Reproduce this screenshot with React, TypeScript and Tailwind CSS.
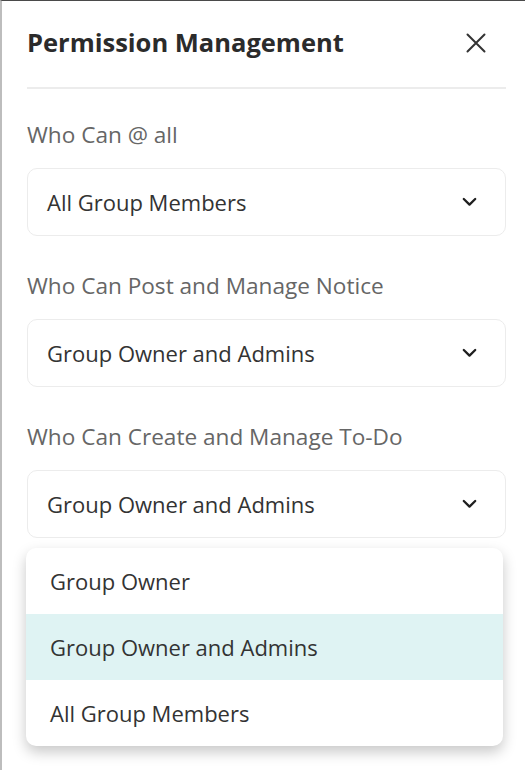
const OPTIONS = ["Group Owner", "Group Owner and Admins", "All Group Members"];

const FIELDS = [
  { label: "Who Can @ all", value: "All Group Members" },
  { label: "Who Can Post and Manage Notice", value: "Group Owner and Admins" },
  { label: "Who Can Create and Manage To-Do", value: "Group Owner and Admins" },
];

function CloseIcon() {
  return (
    <svg width="20" height="20" viewBox="0 0 20 20" className="text-[#333]">
      <path d="M1.5 1.5 18.5 18.5M18.5 1.5 1.5 18.5" stroke="currentColor" strokeWidth="2" strokeLinecap="round" fill="none" />
    </svg>
  );
}

function Chevron() {
  return (
    <svg width="15" height="10" viewBox="0 0 15 10" className="text-[#1f1f1f]">
      <path d="M1.8 2 7.5 7.6 13.2 2" stroke="currentColor" strokeWidth="2.3" strokeLinecap="round" strokeLinejoin="round" fill="none" />
    </svg>
  );
}

function Select({ value }: { value: string }) {
  return (
    <div className="flex items-center justify-between h-[68px] pl-[19px] pr-[28px] rounded-[10px] border border-[#ececec] bg-white">
      <span className="text-[22px] text-[#333]">{value}</span>
      <Chevron />
    </div>
  );
}

export default function App() {
  const openIndex = 2;
  const selected = FIELDS[openIndex].value;

  return (
    <div
      className="w-[525px] h-[770px] bg-white border-t border-t-[#4a4a4a] border-l-2 border-l-[#bdbdbd] overflow-hidden"
      style={{ fontFamily: '"Open Sans", "Noto Sans", sans-serif' }}
    >
      <div className="pl-[25px] pr-[19px]">
        <div className="flex items-center justify-between h-[88px] pb-[3px] border-b-2 border-[#ececec]">
          <h1 className="text-[25.5px] font-bold text-[#2b2b2b]">Permission Management</h1>
          <div className="mr-[20px]">
            <CloseIcon />
          </div>
        </div>

        <div className="pt-[32px]">
          {FIELDS.map((f, i) => (
            <div key={f.label} className="mb-[36px] relative">
              <div className="text-[22.6px] leading-[28px] text-[#666] mb-[19px]">{f.label}</div>
              <Select value={f.value} />
              {i === openIndex && (
                <div className="absolute left-[-1px] right-[3px] top-[125px] z-10 rounded-[10px] bg-white overflow-hidden shadow-[0_6px_14px_rgba(0,0,0,0.22)]">
                  {OPTIONS.map((o) => (
                    <div
                      key={o}
                      className={`h-[66px] flex items-center px-[24px] text-[22px] text-[#333] ${
                        o === selected ? "bg-[#dff3f3]" : ""
                      }`}
                    >
                      {o}
                    </div>
                  ))}
                </div>
              )}
            </div>
          ))}
        </div>
      </div>
    </div>
  );
}
